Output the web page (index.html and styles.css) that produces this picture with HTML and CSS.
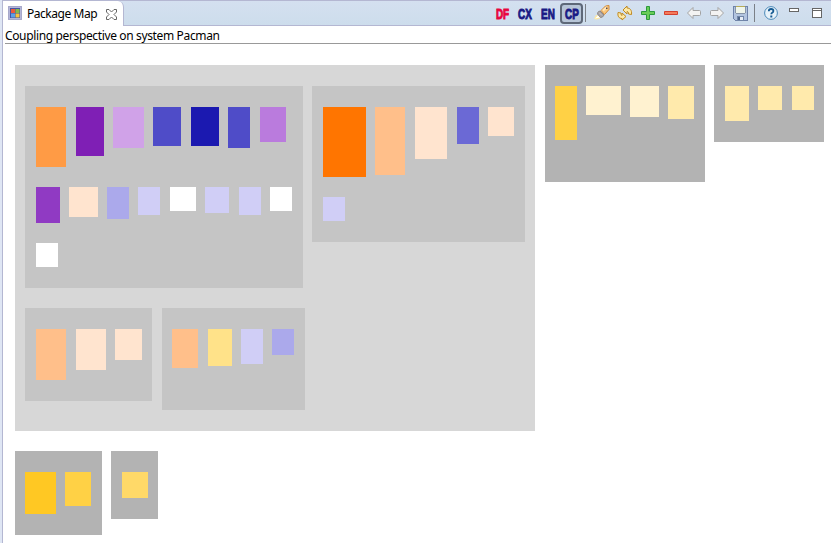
FILE: index.html
```html
<!DOCTYPE html>
<html lang="en">
<head>
<meta charset="utf-8">
<title>Package Map</title>
<link rel="stylesheet" href="styles.css">
</head>
<body>
<div class="view">
  <header class="bar">
    <div class="tab">
      <svg class="tab-icon" width="16" height="16" viewBox="0 0 16 16">
        <rect x="1.500" y="1.500" width="13" height="13" fill="#e2e4f2" stroke="#5c5f9c" stroke-dasharray="1 1"/>
        <rect x="2.500" y="2.500" width="11" height="11" fill="none" stroke="#b4b6d8"/>
        <rect x="3" y="3" width="10" height="10" fill="#4454a4"/>
        <rect x="4" y="4" width="4" height="4" fill="#ec5a3c"/><rect x="8.500" y="4" width="4" height="4" fill="#86b94a"/>
        <rect x="4" y="8.500" width="4" height="4" fill="#5f9fe6"/><rect x="8.500" y="8.500" width="4" height="4" fill="#f6c23c"/>
      </svg>
      <span class="tab-title">Package Map</span>
      <svg class="close" width="11" height="11" viewBox="0 0 11 11"><path d="M.5 .5h2.500l2.500 2.500 2.500-2.500h2.500v2.500l-2.500 2.500 2.500 2.500v2.500h-2.500l-2.500-2.500-2.500 2.500h-2.500v-2.500l2.500-2.500-2.500-2.500z" fill="#fff" stroke="#666"/></svg>
    </div>
    <div class="tools">
      <span class="mode df"><b>DF</b></span>
      <span class="mode"><b>CX</b></span>
      <span class="mode"><b>EN</b></span>
      <span class="mode pressed"><b>CP</b></span>
      <i class="sep"></i>
      <svg class="rocket" width="16" height="16" viewBox="0 0 16 16">
        <path d="M0 14l2-4 4 1 1 2-4 1.500z" fill="#ffe9a0"/><path d="M1 13.500l3-3 2 2z" fill="#fff"/>
        <path d="M7 5.500l4.500-4.500 3.500-.5v4l-4.500 5z" fill="#fbc97e" stroke="#d08a3a"/>
        <path d="M9 5.500l4-3.500" stroke="#ffe7bd" stroke-width="2"/>
        <path d="M6 6l4 4-1.500 2-2 .5-3-3.500.5-2z" fill="#a9a4a4" stroke="#8d8888"/><path d="M5 7.500l3 3" stroke="#ccc8c8"/>
        <rect x="12" y="2.500" width="1.500" height="1.500" fill="#5a4a48"/>
      </svg>
      <svg class="refresh" width="16" height="16" viewBox="0 0 16 16" fill="#fde9a6" stroke="#c08a22" stroke-linejoin="round">
        <path d="M6 5l4-4v2c3 0 5 2 4.500 6.500l-3-.5c0-2-.5-2.500-1.500-2.500v2.500z"/>
        <path d="M9 11.500l-4 3.500v-1.500c-3 0-4.500-2-4-6l3 .5c0 2 .5 2.500 1 2.500v-2.500z"/>
      </svg>
      <svg class="plus" width="14" height="14" viewBox="0 0 14 14"><path d="M5.500.5h3v5h5v3h-5v5h-3v-5h-5v-3h5z" fill="#69cd58" stroke="#2c9a3c"/></svg>
      <svg class="minus" width="14" height="14" viewBox="0 0 14 14"><path d="M.5 5.500h13v3H.5z" fill="#f47b5c" stroke="#d5402e"/></svg>
      <svg class="arrow" width="14" height="14" viewBox="0 0 14 14"><path d="M.5 7l5.500-5.500v3h6.500q1 0 1 1v3q0 1-1 1H6v3z" fill="#f3f3f2" stroke="#a3a3a3"/></svg>
      <svg class="arrow" width="14" height="14" viewBox="0 0 14 14"><path d="M13.500 7L8 1.500v3H1.500q-1 0-1 1v3q0 1 1 1H8v3z" fill="#f3f3f2" stroke="#a3a3a3"/></svg>
      <svg class="save" width="15" height="15" viewBox="0 0 15 15" shape-rendering="crispEdges">
        <path d="M.5.5h14v14H2.500l-2-2z" fill="#b2c4df" stroke="#6f83aa"/>
        <path d="M3 0h9v7H3z" fill="#eff5eb"/><path d="M3 .5h9" stroke="#b6ab59"/><path d="M3 7.500h9M2.500 1v6M12.500 1v6" stroke="#8795a7"/>
        <path d="M4 10h7v5H4z" fill="#7186a8"/><path d="M5 11h5v3H5z" fill="#e8eef6"/><path d="M5 11h2v3H5z" fill="#4f6587"/>
      </svg>
      <i class="sep second"></i>
      <svg class="help" width="14" height="14" viewBox="0 0 14 14"><circle cx="7" cy="7" r="6.400" fill="#e6f1f9" stroke="#4a89b8"/><path d="M4.800 5.200q0-2.200 2.300-2.200t2.300 1.900q0 1.200-1.200 1.800-.9.500-.9 1.600" fill="none" stroke="#155a92" stroke-width="1.800"/><path d="M6.300 9.500h2v2h-2z" fill="#155a92"/></svg>
      <i class="minimize"></i>
      <i class="maximize"></i>
    </div>
  </header>
  <div class="caption"><span>Coupling perspective on system Pacman</span></div>
  <main class="map" id="map"></main>
</div>
<script src="map.js"></script>
</body>
</html>
```
FILE: styles.css
```css
* { box-sizing: border-box; }
body { margin: 0; background: #dfe6f4; overflow: hidden; color: #000; font: 12px/16px "Noto Sans", "Open Sans", sans-serif; }
.view { height: 543px; margin-left: 2px; border-left: 1px solid #b4b7d2; background: #fff; }
.bar { display: flex; justify-content: space-between; height: 26px; border-top: 1px solid #b4b7d2; border-bottom: 1px solid #b4b7d2; background: linear-gradient(#d4e0f0, #cdddec); }
.tab { display: flex; align-items: flex-start; width: 121px; height: 25px; padding: 5px 0 0 4px; background: #fff; border-right: 1px solid #b4b7d2; border-top-right-radius: 6px; }
.tab-icon { flex: none; margin-top: -1px; }
.tab-title { width: 79px; margin-left: 4px; white-space: nowrap; letter-spacing: -.46px; }
.close { flex: none; margin-top: 3px; }
.tools { display: flex; align-items: center; height: 24px; padding-right: 8px; }
.tools > * { flex: none; }
.mode { display: flex; align-items: center; justify-content: center; width: 23px; height: 21px; color: #191a84; font: bold 15px/15px "Liberation Sans", sans-serif; }
.mode b { transform: translateX(.5px) scaleX(.66); -webkit-text-stroke: 1px currentColor; }
.df { color: #e9053d; }
.pressed { width: 23px; border: 2px solid #5e6878; border-radius: 4px; background: #b7c5d7; margin-left: 1px; }
.sep { width: 1px; height: 18px; margin-left: 2px; background: #7b8087; }
.rocket { margin-left: 8px; }
.refresh { margin-left: 7px; }
.plus { margin-left: 8px; }
.minus { margin-left: 9px; }
.arrow { margin-left: 9px; }
.save { margin-left: 9px; }
.second { margin-left: 6px; }
.help { margin-left: 9px; }
.minimize { align-self: flex-start; width: 10px; height: 4px; margin: 7px 0 0 11px; border: 1px solid #666; background: #fff; }
.maximize { align-self: flex-start; width: 10px; height: 10px; margin: 7px 1px 0 13px; border: 1px solid #666; background: linear-gradient(#fff 1px, #666 1px 2px, #fff 2px); }
.caption { height: 18px; margin-left: 2px; border-bottom: 1px solid #999; white-space: nowrap; padding-top: 1px; line-height: 17px; letter-spacing: -.36px; }
.map { padding: 21px 0 0 12px; }
.row { display: flex; align-items: flex-start; }
.row + .row { margin-top: 20px; }
.package, .class { flex: none; width: calc(var(--w) * 1px); height: calc(var(--h) * 1px); margin-left: calc(var(--gap) * 1px); }
.package { padding-top: 21px; background: #b3b3b3; }
.package.parent { background: #d7d7d7; }
.package .package { background: #c5c5c5; }
.class { background: var(--fill); }
```
FILE: map.js
```js
// Class: [gap, width, height, colour]. Package: { gap, w, h, rows }.
const peach = "#ffbf8a", blush = "#ffe4cf", lilac = "#d0cef6", cream = "#fff2d0", sand = "#ffeaac", white = "#ffffff";
const packages = [
  [
    { gap: 0, w: 520, h: 366, parent: true, rows: [
      [
        { gap: 10, w: 278, h: 202, rows: [
          [[11,30,60,"#ff9b45"],[10,28,49,"#7f1fb5"],[9,31,41,"#d0a2e8"],[9,28,39,"#4f4cc8"],[10,28,39,"#1b19b0"],[9,22,41,"#4f4cc8"],[10,26,35,"#ba7bdd"]],
          [[11,24,36,"#903ac3"],[9,29,30,blush],[9,22,32,"#aba9eb"],[9,22,28,lilac],[10,26,24,white],[9,24,26,lilac],[10,22,28,lilac],[9,22,24,white]],
          [[11,22,24,white]]
        ] },
        { gap: 9, w: 213, h: 156, rows: [
          [[11,43,70,"#ff7500"],[9,30,68,peach],[10,32,52,blush],[10,22,37,"#6b69d5"],[9,26,29,blush]],
          [[11,22,24,lilac]]
        ] }
      ],
      [
        { gap: 10, w: 127, h: 93, rows: [[[11,30,51,peach],[10,30,41,blush],[9,27,31,blush]]] },
        { gap: 10, w: 143, h: 102, rows: [[[10,26,39,peach],[10,24,37,"#ffe289"],[9,22,35,lilac],[9,22,26,"#aba9eb"]]] }
      ]
    ] },
    { gap: 10, w: 160, h: 117, rows: [[[10,22,54,"#ffd145"],[9,35,29,cream],[9,29,31,cream],[9,26,33,sand]]] },
    { gap: 9, w: 110, h: 77, rows: [[[11,24,35,sand],[9,24,24,sand],[10,22,24,sand]]] }
  ],
  [
    { gap: 0, w: 87, h: 84, rows: [[[10,31,42,"#ffc823"],[9,26,34,"#ffd145"]]] },
    { gap: 9, w: 47, h: 68, rows: [[[11,26,26,"#ffd968"]]] }
  ]
];

function box(name, gap, w, h) {
  const el = document.createElement("div");
  el.className = name;
  el.style.setProperty("--gap", gap);
  el.style.setProperty("--w", w);
  el.style.setProperty("--h", h);
  return el;
}

function fill(host, rows) {
  for (const items of rows) {
    const row = document.createElement("div");
    row.className = "row";
    for (const item of items) {
      let el;
      if (Array.isArray(item)) {
        el = box("class", item[0], item[1], item[2]);
        el.style.setProperty("--fill", item[3]);
      } else {
        el = box(item.parent ? "package parent" : "package", item.gap, item.w, item.h);
        fill(el, item.rows);
      }
      row.append(el);
    }
    host.append(row);
  }
}

fill(document.getElementById("map"), packages);
```
